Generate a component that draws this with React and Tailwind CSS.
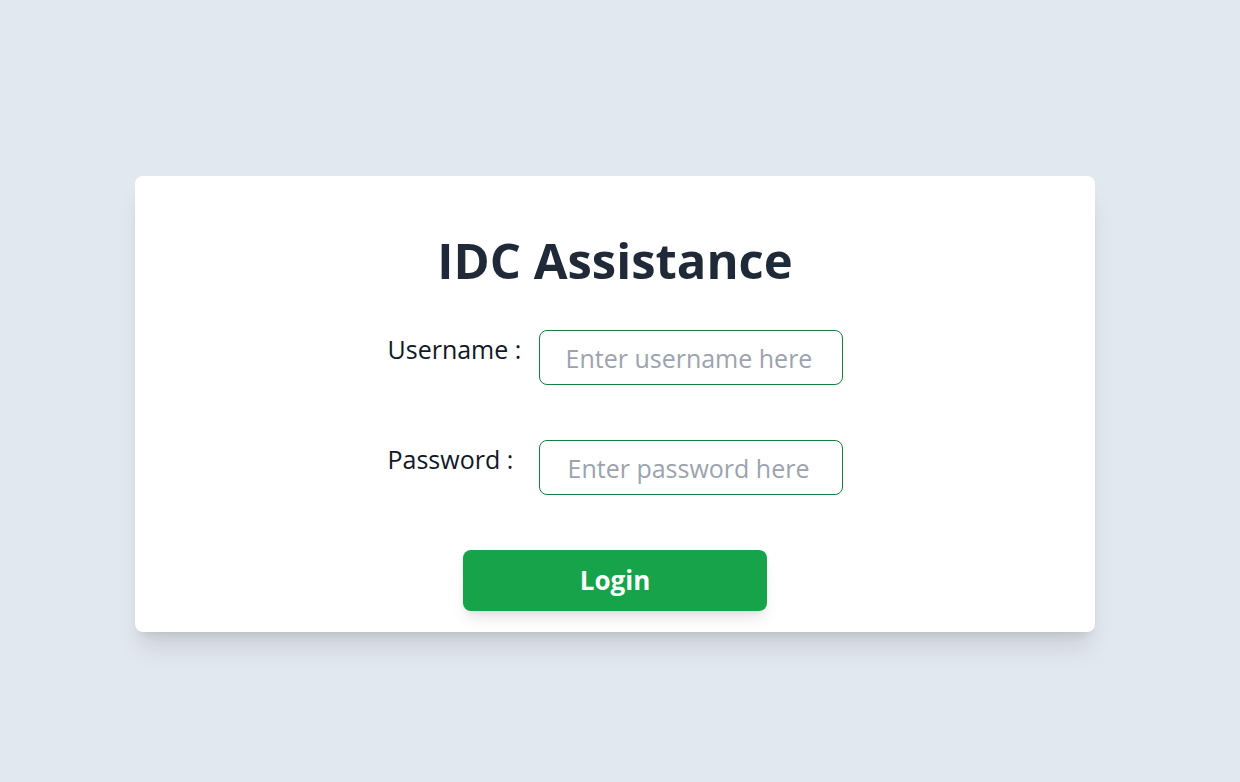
export default function App() {
  return (
    <div
      className="min-h-screen w-full bg-[#e2e8f0] flex justify-center pt-[176px] pr-[10px]"
      style={{ fontFamily: '"Segoe UI", "Open Sans", "Noto Sans", sans-serif' }}
    >
      <div className="w-[960px] h-fit bg-white rounded-lg shadow-xl pt-[56px] pb-[21px] flex flex-col items-center">
        <h1 className="text-[49px] leading-[56px] font-bold text-[#1f2937]">IDC Assistance</h1>

        <form className="mt-[42px] flex flex-col items-center">
          <div className="flex items-start">
            <label className="w-[151px] pt-[1px] text-[25px] text-[#111827]">Username :</label>
            <input
              type="text"
              placeholder="Enter username here"
              className="w-[304px] h-[55px] rounded-lg border border-[#15803d] px-[26px] text-[25px] text-gray-800 placeholder:text-[#9ca3af] outline-none"
            />
          </div>

          <div className="flex items-start mt-[55px]">
            <label className="w-[151px] pt-[1px] text-[25px] text-[#111827]">Password :</label>
            <input
              type="password"
              placeholder="Enter password here"
              className="w-[304px] h-[55px] rounded-lg border border-[#15803d] px-[28px] text-[25px] text-gray-800 placeholder:text-[#9ca3af] outline-none"
            />
          </div>

          <button
            type="button"
            className="mt-[55px] w-[304px] h-[61px] rounded-lg bg-[#16a34a] text-white text-[26px] font-bold shadow-lg"
          >
            Login
          </button>
        </form>
      </div>
    </div>
  )
}
